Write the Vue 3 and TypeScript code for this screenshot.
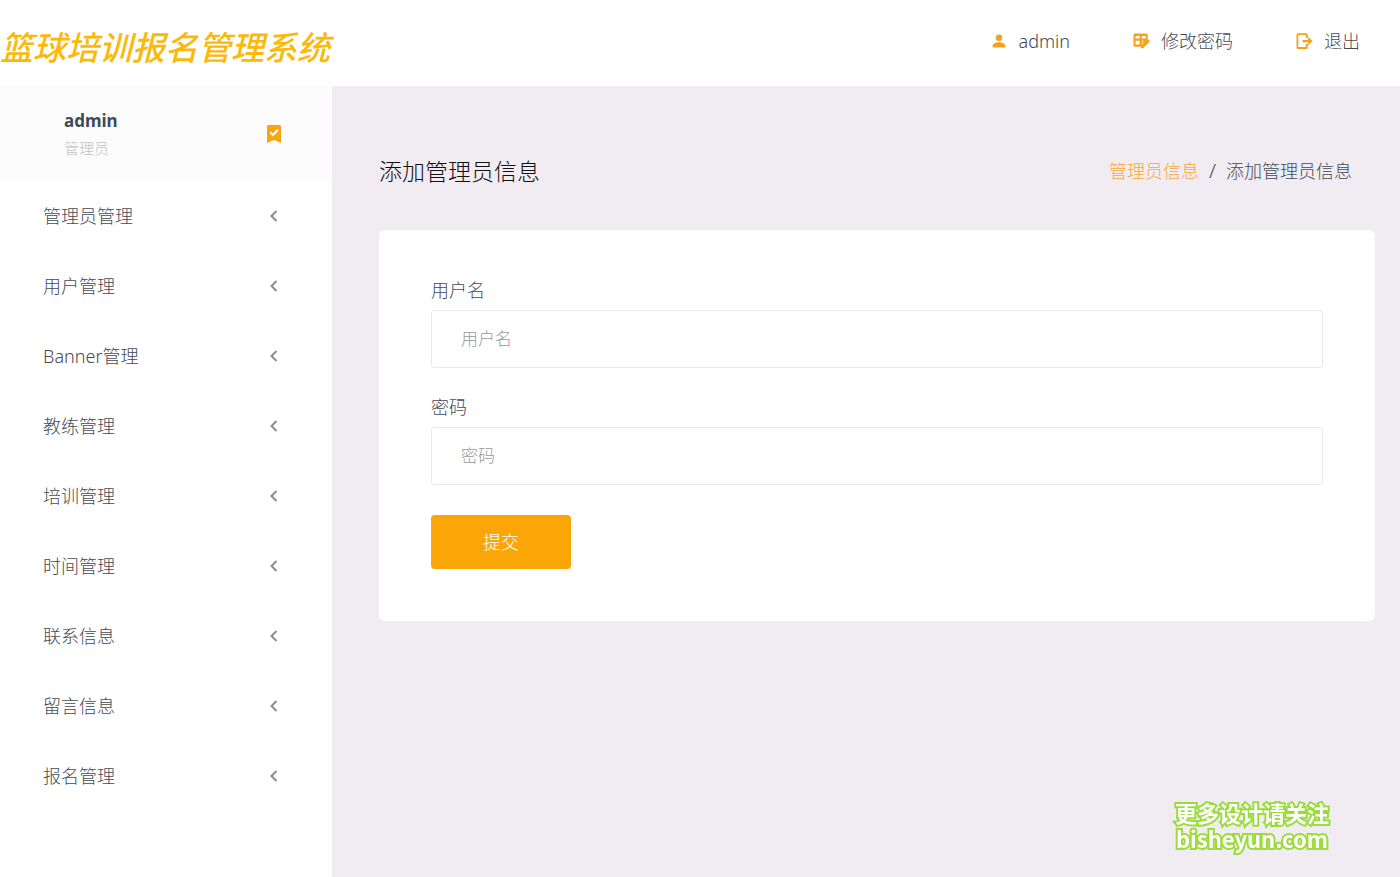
<script setup lang="ts">
import { ref } from 'vue'

const menu: string[] = [
  '管理员管理',
  '用户管理',
  'Banner管理',
  '教练管理',
  '培训管理',
  '时间管理',
  '联系信息',
  '留言信息',
  '报名管理',
]

const username = ref('')
const password = ref('')
</script>

<template>
  <div class="page">
    <header class="topbar">
      <a class="brand" href="#">篮球培训报名管理系统</a>
      <nav class="actions">
        <a class="action" href="#">
          <svg viewBox="0 0 24 24" aria-hidden="true">
            <path d="M12 12a4.300 4.300 0 1 0 0-8.600 4.300 4.300 0 0 0 0 8.600zM3.500 20.500v-2.300c0-3 5.600-4.500 8.500-4.500s8.500 1.500 8.500 4.500v2.300z" />
          </svg>
          <span>admin</span>
        </a>
        <a class="action" href="#">
          <svg viewBox="0 0 24 24" aria-hidden="true">
            <path fill-rule="evenodd" d="M4 2h15a2 2 0 0 1 2 2v5.500l-5 5h-2.500v2.500L11 19.500H4a2 2 0 0 1-2-2V4a2 2 0 0 1 2-2zM4.700 5.200v3.600h5.500V5.200zM13 5.200v3.600h5.400V5.200zM4.700 11.600v5.200h5.500v-5.200zM13 11.600v2.800l3-2.800z" />
            <path d="M21.500 9.800l2 2c.300.300.300.700 0 1l-8.700 8.700h-3v-3l8.700-8.700c.300-.300.700-.300 1 0z" />
          </svg>
          <span>修改密码</span>
        </a>
        <a class="action" href="#">
          <svg viewBox="0 0 24 24" aria-hidden="true">
            <path d="M4 1.500h11a2 2 0 0 1 2 2V8h-2.400V4H4.400v16h10.200v-4H17v4.500a2 2 0 0 1-2 2H4a2 2 0 0 1-2-2v-17a2 2 0 0 1 2-2zM17.500 6.500L23.500 12l-6 5.500v-4H10v-3h7.500z" />
          </svg>
          <span>退出</span>
        </a>
      </nav>
    </header>

    <div class="body">
      <aside class="sidebar">
        <div class="profile">
          <div>
            <div class="profile-name">admin</div>
            <div class="profile-role">管理员</div>
          </div>
          <svg class="badge" viewBox="0 0 16 20" aria-hidden="true">
            <path d="M2.500 1h11A1.500 1.500 0 0 1 15 2.500V19l-7-3-7 3V2.500A1.500 1.500 0 0 1 2.500 1z" />
            <path class="tick" d="M4.200 8.300l2.800 2.700 5-5.300" />
          </svg>
        </div>
        <nav>
          <a v-for="item in menu" :key="item" class="menu-item" href="#">
            <span>{{ item }}</span>
            <svg viewBox="0 0 16 16" aria-hidden="true"><path d="M10.500 3l-5 5 5 5" /></svg>
          </a>
        </nav>
      </aside>

      <main class="content">
        <div class="heading">
          <h1>添加管理员信息</h1>
          <nav class="crumbs">
            <a href="#">管理员信息</a>
            <span class="slash">/</span>
            <span>添加管理员信息</span>
          </nav>
        </div>

        <form class="card" @submit.prevent>
          <div class="field">
            <label for="username">用户名</label>
            <input id="username" v-model="username" type="text" placeholder="用户名" />
          </div>
          <div class="field">
            <label for="password">密码</label>
            <input id="password" v-model="password" type="password" placeholder="密码" />
          </div>
          <button type="submit">提交</button>
        </form>
      </main>
    </div>

    <div class="watermark">
      <div>更多设计请关注</div>
      <div>bisheyun.com</div>
    </div>
  </div>
</template>

<style>
body {
  margin: 0;
}
</style>

<style scoped>
.page {
  display: flex;
  flex-direction: column;
  min-height: 100vh;
  background: #f1ecf2;
  color: #444b54;
  font-family: "Noto Sans", "Noto Sans CJK SC", sans-serif;
  font-size: 18px;
  font-weight: 300;
  line-height: 28px;
}

.page * {
  box-sizing: border-box;
}

a {
  color: inherit;
  text-decoration: none;
}

.topbar {
  display: flex;
  align-items: center;
  justify-content: space-between;
  height: 86px;
  padding: 0 40px 4px 0;
  background: #fff;
}

.brand {
  padding-top: 10px;
  color: #fbb90c;
  font-family: "Noto Sans CJK SC", sans-serif;
  font-size: 33px;
  font-style: italic;
  font-weight: 500;
  line-height: 48px;
  white-space: nowrap;
}

.actions {
  display: flex;
  gap: 62px;
}

.action {
  display: flex;
  align-items: center;
  gap: 11px;
}

.action svg {
  width: 18px;
  height: 18px;
  fill: #f4a21c;
}

.body {
  display: flex;
  flex: 1;
}

.sidebar {
  flex: none;
  width: 332px;
  background: #fff;
}

.profile {
  display: flex;
  align-items: center;
  justify-content: space-between;
  height: 95px;
  padding: 0 50px 0 64px;
  background: #fcfcfc;
}

.profile-name {
  font-size: 17px;
  font-weight: 700;
  color: #404a57;
}

.profile-role {
  font-size: 15px;
  line-height: 26px;
  color: #c4c4c8;
}

.badge {
  width: 16px;
  height: 20px;
  fill: #f9a510;
}

.tick {
  fill: none;
  stroke: #fff;
  stroke-width: 2;
}

.menu-item {
  display: flex;
  align-items: center;
  justify-content: space-between;
  height: 70px;
  padding: 0 50px 0 43px;
}

.menu-item svg {
  width: 16px;
  height: 16px;
  fill: none;
  stroke: #8b8b8b;
  stroke-width: 2;
}

.content {
  flex: 1;
  padding: 60px 25px 60px 47px;
}

.heading {
  display: flex;
  align-items: center;
  justify-content: space-between;
  height: 50px;
  margin-bottom: 34px;
  padding-right: 23px;
}

h1 {
  margin: 0;
  color: #111;
  font-size: 23px;
  font-weight: 300;
}

.crumbs {
  display: flex;
  gap: 10px;
}

.crumbs a {
  color: #f8a83a;
}

.slash {
  font-size: 20px;
}

.card {
  padding: 46px 52px 52px;
  border-radius: 6px;
  background: #fff;
}

.field {
  display: flex;
  flex-direction: column;
  gap: 6px;
  margin-bottom: 25px;
}

.field:last-of-type {
  margin-bottom: 30px;
}

.field input {
  width: 100%;
  height: 58px;
  padding: 0 29px 2px;
  border: 1px solid #e9e9eb;
  border-radius: 3px;
  background: #fff;
  color: #444b54;
  font: inherit;
  font-size: 17px;
  outline: none;
}

.field input::placeholder {
  color: #999;
  opacity: 1;
}

button {
  display: block;
  width: 140px;
  height: 54px;
  padding: 0;
  border: 0;
  border-radius: 4px;
  background: #fca506;
  color: #fff;
  font: inherit;
  cursor: pointer;
}

.watermark {
  position: fixed;
  right: 71px;
  bottom: 26px;
  color: #fff;
  font-family: "Noto Sans CJK SC", sans-serif;
  font-size: 22px;
  font-weight: 700;
  line-height: 26px;
  text-align: center;
  -webkit-text-stroke: 4px #9bdc3c;
  paint-order: stroke fill;
  pointer-events: none;
}
</style>
